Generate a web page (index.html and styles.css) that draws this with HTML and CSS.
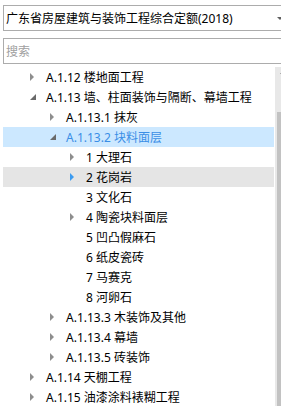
FILE: index.html
```html
<!DOCTYPE html>
<html lang="zh-CN">
<head>
    <meta charset="UTF-8">
    <meta name="viewport" content="width=device-width, initial-scale=1.0">
    <title>定额目录</title>
    <link rel="stylesheet" href="styles.css">
</head>
<body>

<div class="select">
    <span class="select-text">广东省房屋建筑与装饰工程综合定额(2018)</span>
    <span class="select-arrow"></span>
</div>

<div class="search">
    <input type="text" placeholder="搜索">
</div>

<div class="tree-wrap">
    <div class="tree">
        <div class="row d0 closed"><span class="tog"></span><span class="label">A.1.12 楼地面工程</span></div>
        <div class="row d0 open"><span class="tog"></span><span class="label">A.1.13 墙、柱面装饰与隔断、幕墙工程</span></div>
        <div class="row d1 closed"><span class="tog"></span><span class="label">A.1.13.1 抹灰</span></div>
        <div class="row d1 open selected"><span class="tog"></span><span class="label">A.1.13.2 块料面层</span></div>
        <div class="row d2 closed"><span class="tog"></span><span class="label">1 大理石</span></div>
        <div class="row d2 closed hover"><span class="tog"></span><span class="label">2 花岗岩</span></div>
        <div class="row d2"><span class="tog"></span><span class="label">3 文化石</span></div>
        <div class="row d2 closed"><span class="tog"></span><span class="label">4 陶瓷块料面层</span></div>
        <div class="row d2"><span class="tog"></span><span class="label">5 凹凸假麻石</span></div>
        <div class="row d2"><span class="tog"></span><span class="label">6 纸皮瓷砖</span></div>
        <div class="row d2"><span class="tog"></span><span class="label">7 马赛克</span></div>
        <div class="row d2"><span class="tog"></span><span class="label">8 河卵石</span></div>
        <div class="row d1 closed"><span class="tog"></span><span class="label">A.1.13.3 木装饰及其他</span></div>
        <div class="row d1 closed"><span class="tog"></span><span class="label">A.1.13.4 幕墙</span></div>
        <div class="row d1 closed"><span class="tog"></span><span class="label">A.1.13.5 砖装饰</span></div>
        <div class="row d0 closed"><span class="tog"></span><span class="label">A.1.14 天棚工程</span></div>
        <div class="row d0 closed"><span class="tog"></span><span class="label">A.1.15 油漆涂料裱糊工程</span></div>
    </div>
    <div class="scrollbar">
        <span class="scroll-up"></span>
        <div class="thumb"></div>
    </div>
</div>

</body>
</html>
```

FILE: styles.css
```css
html, body {
    margin: 0;
    overflow: hidden;
}

body {
    font-family: "Noto Sans", "Noto Sans CJK SC", sans-serif;
    font-size: 12px;
    color: #000;
    background-color: #fff;
    padding-top: 5px;
}

.select {
    margin-left: 3px;
    width: 290px;
    height: 26px;
    box-sizing: border-box;
    border: 1px solid #acacac;
    display: flex;
    align-items: center;
    justify-content: space-between;
    padding: 0 9px 0 2px;
}

.select-arrow {
    width: 0;
    height: 0;
    border-left: 3px solid transparent;
    border-right: 3px solid transparent;
    border-top: 3px solid #606060;
}

.search {
    margin: 7px 0 0 3px;
    width: 290px;
}

.search input {
    width: 100%;
    height: 26px;
    box-sizing: border-box;
    border: 1px solid #acacac;
    padding: 0 2px;
    margin: 0;
    font-family: inherit;
    font-size: 12px;
    outline: none;
}

.search input::placeholder {
    color: #a0a0a0;
}

.tree-wrap {
    margin: 3px 0 0 3px;
    display: flex;
    height: 345px;
}

.tree {
    width: 271px;
    flex-shrink: 0;
    overflow: hidden;
}

.row {
    height: 20px;
    display: flex;
    align-items: center;
    white-space: nowrap;
}

.d0 { padding-left: 24px; }
.d1 { padding-left: 44px; }
.d2 { padding-left: 64px; }

.tog {
    width: 19px;
    height: 20px;
    flex-shrink: 0;
    display: flex;
    align-items: center;
}

.closed .tog::before {
    content: "";
    margin-left: 3px;
    border-top: 4px solid transparent;
    border-bottom: 4px solid transparent;
    border-left: 4px solid #8e8e8e;
}

.open .tog::before {
    content: "";
    margin-left: 3px;
    border-left: 6px solid transparent;
    border-bottom: 6px solid #6a6a6a;
}

.selected {
    background-color: #cce8ff;
}

.selected .label {
    color: #3a8ee6;
}

.hover {
    background-color: #e5e5e5;
}

.hover .tog::before {
    border-left-color: #3c9bf0;
}

.scrollbar {
    margin-left: 1px;
    width: 17px;
    flex-shrink: 0;
    background-color: #e8e8e8;
    display: flex;
    flex-direction: column;
    align-items: center;
}

.scroll-up {
    margin-top: 3px;
    width: 0;
    height: 0;
    border-left: 4px solid transparent;
    border-right: 4px solid transparent;
    border-bottom: 4px solid #707070;
}

.thumb {
    margin-top: 38px;
    width: 13px;
    flex-grow: 1;
    background-color: #c2c2c2;
}
```
